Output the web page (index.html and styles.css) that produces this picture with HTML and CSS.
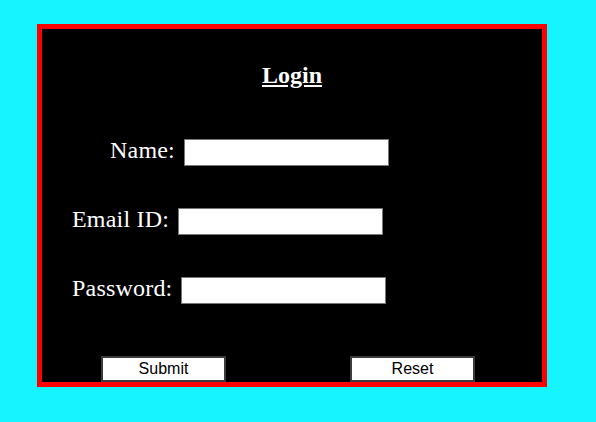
FILE: index.html
```html
<!DOCTYPE html>
<html>
<head>
<meta charset="utf-8">
<link rel="stylesheet" href="styles.css">
</head>
<body>
<form class="frame">
  <h1 class="title">Login</h1>
  <div class="row row-name">
    <label class="label">Name:</label>
    <input class="field" type="text">
  </div>
  <div class="row row-email">
    <label class="label">Email ID:</label>
    <input class="field" type="text">
  </div>
  <div class="row row-pass">
    <label class="label">Password:</label>
    <input class="field" type="password">
  </div>
  <div class="actions">
    <button class="btn" type="button">Submit</button>
    <button class="btn" type="button">Reset</button>
  </div>
</form>
</body>
</html>
```
FILE: styles.css
```css
html, body {
  margin: 0;
  padding: 0;
}
body {
  background: #15f4ff;
  width: 596px;
  height: 422px;
  overflow: hidden;
}
.frame {
  box-sizing: border-box;
  margin: 24px 0 0 37px;
  width: 510px;
  height: 363px;
  border: 5px solid #ff0000;
  background: #000;
  color: #fff;
  font-family: "Liberation Serif", "Times New Roman", serif;
  display: flex;
  flex-direction: column;
}
.title {
  margin: 33px 0 0 0;
  font-size: 24px;
  font-weight: bold;
  text-decoration: underline;
  text-align: center;
  line-height: 27px;
}
.row {
  display: flex;
  align-items: flex-start;
  height: 27px;
}
.row-name { margin-top: 50px; padding-left: 68px; gap: 9px; }
.row-email { margin-top: 42px; padding-left: 30px; gap: 9px; }
.row-pass { margin-top: 42px; padding-left: 30px; gap: 9px; }
.label {
  font-size: 24px;
  line-height: 22px;
  white-space: nowrap;
  letter-spacing: 0.2px;
}
.field {
  box-sizing: border-box;
  width: 205px;
  height: 27px;
  margin: 0;
  border: 1px solid #767676;
  background: #fff;
  padding: 0 4px;
}
.actions {
  margin-top: 52px;
  padding-left: 59px;
  display: flex;
  gap: 124px;
}
.btn {
  box-sizing: border-box;
  width: 125px;
  height: 26px;
  margin: 0;
  padding: 0;
  background: #fff;
  color: #000;
  border: 2px solid #3c3c3c;
  font-family: "Liberation Sans", Arial, sans-serif;
  font-size: 16px;
  line-height: 20px;
}
```
